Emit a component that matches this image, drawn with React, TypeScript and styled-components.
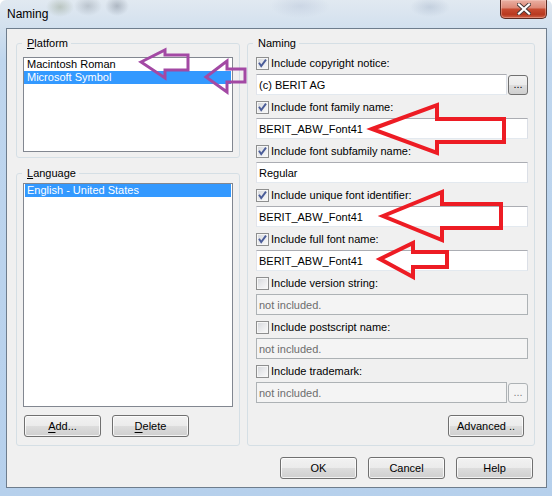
import styled, { createGlobalStyle } from 'styled-components';

const GlobalStyle = createGlobalStyle`
  html, body {
    margin: 0;
    padding: 0;
    background: #ffffff;
  }
  body {
    font-family: 'Liberation Sans', Arial, sans-serif;
    font-size: 11px;
    color: #000;
  }
`;

const uiFont = `font-family: 'Liberation Sans', Arial, sans-serif;`;

const Window = styled.div`
  position: relative;
  width: 552px;
  height: 496px;
  box-sizing: border-box;
  display: flex;
  flex-direction: column;
  padding: 0 5px 8px 6px;
  border-radius: 6px 6px 0 0;
  overflow: hidden;
  background:
    radial-gradient(ellipse 14px 10px at 60px 7px, rgba(120, 135, 105, 0.35), transparent),
    radial-gradient(ellipse 14px 10px at 88px 6px, rgba(105, 115, 125, 0.3), transparent),
    radial-gradient(ellipse 12px 10px at 117px 6px, rgba(85, 95, 110, 0.35), transparent),
    radial-gradient(ellipse 30px 12px at 300px 6px, rgba(150, 165, 195, 0.25), transparent),
    radial-gradient(ellipse 20px 10px at 430px 7px, rgba(120, 140, 170, 0.25), transparent),
    linear-gradient(180deg, #e1e9f1 0px, #d2e0ee 28px, #bfd6ee 60px, #b6d0ec 100%);
`;

const TitleBar = styled.div`
  flex: none;
  display: flex;
  align-items: flex-start;
  height: 28px;
`;

const Title = styled.span`
  ${uiFont}
  margin-left: 1px;
  font-size: 12px;
  line-height: 29px;
  color: #000;
`;

const CloseButton = styled.div`
  margin-left: auto;
  width: 47px;
  height: 19px;
  box-sizing: border-box;
  display: flex;
  align-items: center;
  justify-content: center;
  border: 1px solid #5a2a22;
  border-top: none;
  border-radius: 0 0 5px 5px;
  background: linear-gradient(
    180deg,
    #eab0a3 0%,
    #de8a78 42%,
    #c74a30 52%,
    #b8391f 80%,
    #d06248 100%
  );
  box-shadow: inset 0 0 0 1px rgba(255, 220, 210, 0.35);
`;

const Client = styled.div`
  flex: 1;
  display: flex;
  flex-direction: column;
  border: 1px solid #6e7d8d;
  background: #f0f0f0;
  padding: 8px 11px 8px 9px;
`;

const Panels = styled.div`
  display: flex;
  gap: 7px;
`;

const LeftColumn = styled.div`
  width: 224px;
  display: flex;
  flex-direction: column;
  gap: 9px;
`;

const GroupBox = styled.fieldset<{ $padding: string; $width?: number }>`
  margin: 0;
  min-width: 0;
  box-sizing: border-box;
  width: ${({ $width }) => ($width ? `${$width}px` : 'auto')};
  padding: ${({ $padding }) => $padding};
  border: 1px solid #d5dfe5;
  border-radius: 3px;
  display: flex;
  flex-direction: column;
`;

const Legend = styled.legend<{ $indent: number }>`
  ${uiFont}
  margin-left: ${({ $indent }) => $indent}px;
  padding: 0 3px 0 5px;
  font-size: 11px;
  line-height: 13px;
`;

const ListBox = styled.div<{ $height: number }>`
  height: ${({ $height }) => $height}px;
  box-sizing: border-box;
  border: 1px solid #828790;
  background: #ffffff;
  padding: 0 1px 0 0;
`;

const ListItem = styled.div<{ $selected?: boolean; $inset?: number }>`
  ${uiFont}
  height: 13px;
  margin-left: ${({ $inset }) => $inset ?? 0}px;
  padding-left: ${({ $inset }) => 3 - ($inset ?? 0)}px;
  font-size: 11px;
  line-height: 13px;
  white-space: nowrap;
  background: ${({ $selected }) => ($selected ? '#3399ff' : 'transparent')};
  color: ${({ $selected }) => ($selected ? '#ffffff' : '#000000')};
`;

const ButtonRow = styled.div<{ $justify?: string; $gap?: number; $top: number }>`
  display: flex;
  justify-content: ${({ $justify }) => $justify ?? 'flex-start'};
  gap: ${({ $gap }) => $gap ?? 11}px;
  margin-top: ${({ $top }) => $top}px;
`;

const Button = styled.button<{ $width?: number }>`
  ${uiFont}
  width: ${({ $width }) => $width ?? 77}px;
  height: 22px;
  padding: 0;
  box-sizing: border-box;
  border: 1px solid #707070;
  border-radius: 3px;
  background: linear-gradient(180deg, #f2f2f2 0%, #ebebeb 50%, #dddddd 51%, #cfcfcf 100%);
  box-shadow: inset 0 0 0 1px rgba(255, 255, 255, 0.75);
  font-size: 11px;
  color: #000;

  & u {
    text-decoration-thickness: 1px;
    text-underline-offset: 2px;
  }
`;

const FieldRow = styled.div`
  display: flex;
  align-items: center;
  gap: 1px;
  margin-top: 4px;
`;

const TextField = styled.input`
  ${uiFont}
  flex: 1;
  min-width: 0;
  height: 21px;
  box-sizing: border-box;
  margin: 0;
  padding: 0 0 0 2px;
  border: 1px solid;
  border-color: #abadb3 #dbdfe6 #e3e9ef #e2e3ea;
  background: #ffffff;
  font-size: 11px;
  color: #000;
  outline: none;

  &:disabled {
    border-color: #adb2b5;
    background: #f4f4f4;
    color: #6d6d6d;
  }
`;

const BrowseButton = styled.button<{ $disabled?: boolean }>`
  ${uiFont}
  width: 20px;
  height: 20px;
  padding: 0 0 3px;
  box-sizing: border-box;
  border: 1px solid ${({ $disabled }) => ($disabled ? '#adb2b5' : '#707070')};
  border-radius: 3px;
  background: ${({ $disabled }) =>
    $disabled
      ? '#f4f4f4'
      : 'linear-gradient(180deg, #f2f2f2 0%, #ebebeb 50%, #dddddd 51%, #cfcfcf 100%)'};
  font-size: 11px;
  line-height: 16px;
  color: ${({ $disabled }) => ($disabled ? '#838383' : '#000')};
`;

const FieldGroup = styled.div`
  display: flex;
  flex-direction: column;
  margin-bottom: 5px;
`;

const CheckLine = styled.label`
  ${uiFont}
  display: flex;
  align-items: center;
  gap: 2px;
  height: 14px;
  font-size: 11px;
  white-space: nowrap;
`;

const CheckBox = styled.span`
  width: 13px;
  height: 13px;
  flex: none;
  box-sizing: border-box;
  border: 1px solid #8e8f8f;
  background: linear-gradient(135deg, #d4d6da 0%, #e9eaec 50%, #fafafa 100%);
  box-shadow: inset 0 0 0 1px #f6f6f6;
  display: flex;
  align-items: center;
  justify-content: center;
`;

const AdvancedRow = styled.div`
  display: flex;
  justify-content: flex-end;
  margin-top: 7px;
  padding-right: 4px;
`;

const Annotations = styled.svg`
  position: absolute;
  left: 0;
  top: 0;
  pointer-events: none;
`;

function CheckMark() {
  return (
    <svg width="11" height="11" viewBox="0 0 11 11">
      <polyline
        points="2,4.8 4.2,8 9,1.6"
        fill="none"
        stroke="#4a5c98"
        strokeWidth="1.9"
        strokeLinejoin="miter"
      />
    </svg>
  );
}

function CloseGlyph() {
  return (
    <svg width="14" height="12" viewBox="0 0 14 12">
      <path d="M2 1.5 L12 10.5 M12 1.5 L2 10.5" stroke="#4a3a38" strokeWidth="4" strokeLinecap="square" />
      <path d="M2 1.5 L12 10.5 M12 1.5 L2 10.5" stroke="#ffffff" strokeWidth="2.2" strokeLinecap="square" />
    </svg>
  );
}

interface FieldProps {
  label: string;
  value: string;
  checked?: boolean;
  browse?: boolean;
}

function NamingField({ label, value, checked = false, browse = false }: FieldProps) {
  return (
    <FieldGroup>
      <CheckLine>
        <CheckBox>{checked && <CheckMark />}</CheckBox>
        {label}
      </CheckLine>
      <FieldRow>
        <TextField readOnly disabled={!checked} value={value} />
        {browse && <BrowseButton $disabled={!checked}>...</BrowseButton>}
      </FieldRow>
    </FieldGroup>
  );
}

const fields: FieldProps[] = [
  { label: 'Include copyright notice:', value: '(c) BERIT AG', checked: true, browse: true },
  { label: 'Include font family name:', value: 'BERIT_ABW_Font41', checked: true },
  { label: 'Include font subfamily name:', value: 'Regular', checked: true },
  { label: 'Include unique font identifier:', value: 'BERIT_ABW_Font41', checked: true },
  { label: 'Include full font name:', value: 'BERIT_ABW_Font41', checked: true },
  { label: 'Include version string:', value: 'not included.' },
  { label: 'Include postscript name:', value: 'not included.' },
  { label: 'Include trademark:', value: 'not included.', browse: true },
];

export default function App() {
  return (
    <>
      <GlobalStyle />
      <Window>
        <TitleBar>
          <Title>Naming</Title>
          <CloseButton>
            <CloseGlyph />
          </CloseButton>
        </TitleBar>

        <Client>
          <Panels>
            <LeftColumn>
              <GroupBox $padding="7px 6px 5px">
                <Legend $indent={-1}>
                  <u>P</u>latform
                </Legend>
                <ListBox $height={95}>
                  <ListItem>Macintosh Roman</ListItem>
                  <ListItem $selected>Microsoft Symbol</ListItem>
                </ListBox>
              </GroupBox>

              <GroupBox $padding="3px 6px 8px">
                <Legend $indent={-1}>
                  <u>L</u>anguage
                </Legend>
                <ListBox $height={224}>
                  <ListItem $selected $inset={1}>
                    English - United States
                  </ListItem>
                </ListBox>
                <ButtonRow $top={8}>
                  <Button style={{ marginLeft: 1 }}>
                    <u>A</u>dd...
                  </Button>
                  <Button>
                    <u>D</u>elete
                  </Button>
                </ButtonRow>
              </GroupBox>
            </LeftColumn>

            <GroupBox $padding="6px 6px 8px 8px" $width={288}>
              <Legend $indent={-3}>Naming</Legend>
              {fields.map((f) => (
                <NamingField key={f.label} {...f} />
              ))}
              <AdvancedRow>
                <Button $width={76}>Advanced ..</Button>
              </AdvancedRow>
            </GroupBox>
          </Panels>

          <ButtonRow $justify="flex-end" $top={11} style={{ paddingRight: 2 }}>
            <Button>OK</Button>
            <Button>Cancel</Button>
            <Button>Help</Button>
          </ButtonRow>
        </Client>

        <Annotations width="552" height="496" viewBox="0 0 552 496">
          <g fill="none" stroke="#a349a4" strokeWidth="3" strokeLinejoin="miter">
            <polygon points="141,62 165,50 165,55 188,55 188,70 165,70 165,78" />
            <polygon points="206,77 227,61 227,69 245,69 245,82 227,82 227,92" />
          </g>
          <g fill="none" stroke="#ed1c24" strokeWidth="4" strokeLinejoin="miter">
            <polygon points="372,129 437,105 437,119 504,119 504,142 437,142 437,153" />
            <polygon points="383,216 442,192 442,204 501,204 501,228 442,228 442,240" />
            <polygon points="380,259 413,243 413,252 447,252 447,267 413,267 413,277" />
          </g>
        </Annotations>
      </Window>
    </>
  );
}
